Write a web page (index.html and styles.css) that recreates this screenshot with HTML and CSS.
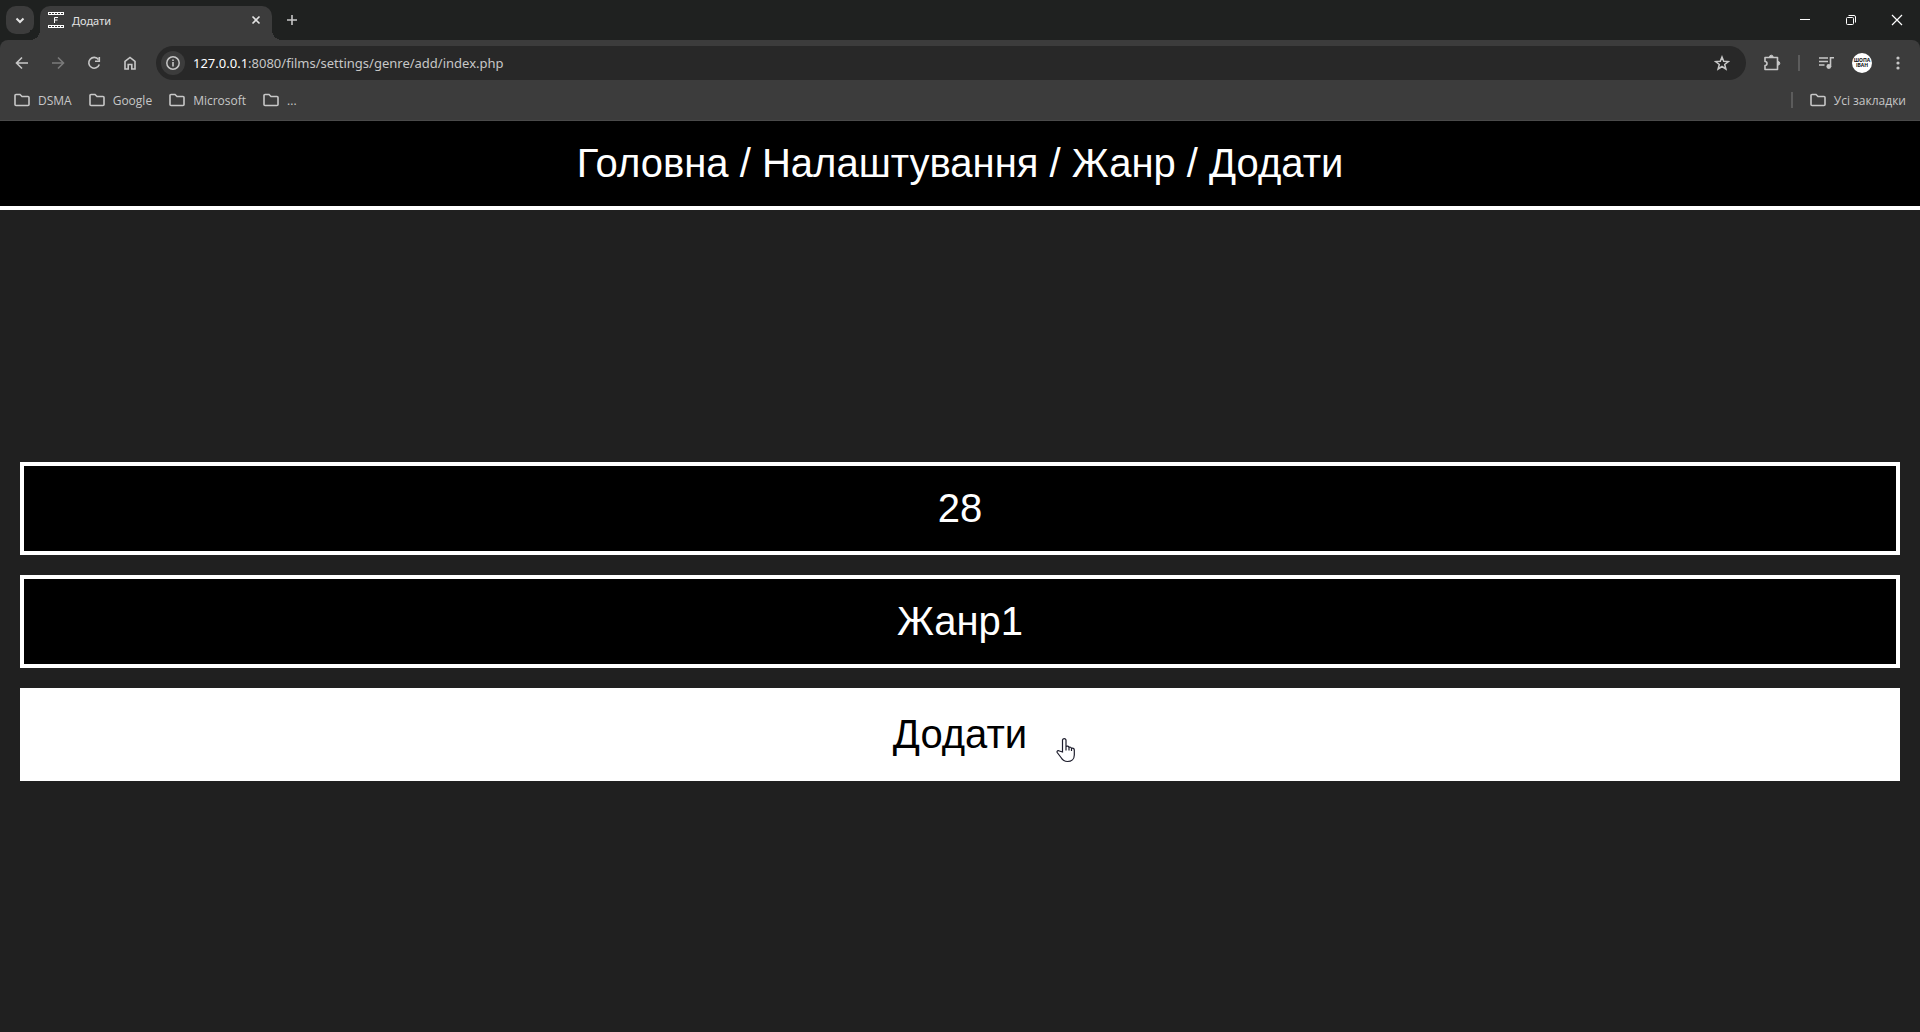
FILE: index.html
```html
<!DOCTYPE html>
<html lang="uk">
<head>
<meta charset="utf-8">
<title>Додати</title>
<link rel="stylesheet" href="styles.css">
</head>
<body>
<header class="browser">
  <div class="tabstrip">
    <button class="tab-search" aria-label="Пошук вкладок"><svg width="28" height="28" viewBox="0 0 28 28"><path d="M10.500 12.500l3.500 3.500 3.500-3.500" stroke-width="2"/></svg></button>
    <div class="tab">
      <svg width="16" height="16" viewBox="0 0 16 16"><path d="M0 1.500h16M0 14.500h16" stroke="#fff" stroke-width="3"/><path d="M1 1.500h15M1 14.500h15" stroke="#333" stroke-width="1" stroke-dasharray="2 1"/><path d="M6.500 11V5.500H10M6 8h3.500" stroke="#fff" stroke-width="1"/></svg>
      <span class="tab-title">Додати</span>
      <button class="tab-close" aria-label="Закрити вкладку"><svg width="16" height="16" viewBox="0 0 16 16"><path d="M4.500 4.500l7 7M11.500 4.500l-7 7"/></svg></button>
    </div>
    <button class="new-tab" aria-label="Нова вкладка"><svg width="16" height="16" viewBox="0 0 16 16"><path d="M8 3v10M3 8h10"/></svg></button>
    <div class="window-controls">
      <button aria-label="Згорнути"><svg width="12" height="12" viewBox="0 0 12 12"><path d="M1 5.500h10" stroke="#fff" stroke-width="1"/></svg></button>
      <button aria-label="Відновити"><svg width="12" height="12" viewBox="0 0 12 12"><rect x="1.500" y="3.500" width="7" height="7" rx="1" stroke="#fff" stroke-width="1"/><path d="M3.500 1.500h5.500a1.500 1.500 0 0 1 1.500 1.500v5.500" stroke="#fff" stroke-width="1"/></svg></button>
      <button aria-label="Закрити"><svg width="12" height="12" viewBox="0 0 12 12"><path d="M1 1l10 10M11 1L1 11" stroke="#fff" stroke-width="1.200"/></svg></button>
    </div>
  </div>
  <div class="toolbar">
    <nav class="nav-buttons">
      <button aria-label="Назад"><svg width="16" height="16" viewBox="0 0 16 16"><path d="M14 8H3M8 2.500L2.500 8 8 13.500"/></svg></button>
      <button class="is-disabled" aria-label="Вперед" disabled><svg width="16" height="16" viewBox="0 0 16 16"><path d="M2 8h11M8 2.500L13.500 8 8 13.500"/></svg></button>
      <button aria-label="Оновити"><svg width="16" height="16" viewBox="0 0 16 16"><path d="M12.500 4.500A5.400 5.400 0 1 0 13.300 9.500"/><path d="M13.300 2v4.200H9"/></svg></button>
      <button aria-label="Головна сторінка"><svg width="16" height="16" viewBox="0 0 16 16"><path d="M3 14V6.500L8 2.500l5 4V14H9.800V9.500H6.200V14z"/></svg></button>
    </nav>
    <div class="omnibox">
      <span class="site-info"><svg width="16" height="16" viewBox="0 0 16 16"><circle cx="8" cy="8" r="6.200" stroke-width="1.500"/><path d="M8 7v4.500M8 4.500v1.500"/></svg></span>
      <div class="url"><span class="host">127.0.0.1</span>:8080/films/settings/genre/add/index.php</div>
      <button class="star" aria-label="Додати до закладок"><svg width="16" height="16" viewBox="0 0 16 16"><path d="M8 2l1.700 4.300 4.600.3-3.600 2.900 1.200 4.500L8 11.500 4.100 14l1.200-4.500L1.700 6.600l4.600-.3z" stroke-width="1.500"/></svg></button>
    </div>
    <div class="actions">
      <button aria-label="Розширення"><svg width="18" height="18" viewBox="0 0 18 18"><path d="M2 3.500h12.500v12H2v-4a2 2 0 0 0 0-4z" stroke-linejoin="round"/><path d="M6.500 3a1.800 1.800 0 0 1 3.600 0zM15 7.500a1.800 1.800 0 0 1 0 3.600z" fill="#c7c7c7" stroke-width="1"/></svg></button>
      <span class="divider"></span>
      <button aria-label="Медіа"><svg width="18" height="18" viewBox="0 0 18 18"><path d="M2 4h9M2 7.500h9M2 11h5.500M13.500 13V3.700H17"/><circle cx="11.800" cy="12.500" r="2.400" fill="#c7c7c7" stroke="none"/></svg></button>
      <button aria-label="Профіль"><span class="avatar">ШОПА<br>ІВАН</span></button>
      <button aria-label="Меню"><svg width="16" height="16" viewBox="0 0 16 16"><g fill="#c7c7c7" stroke="none"><circle cx="8" cy="3" r="1.600"/><circle cx="8" cy="8" r="1.600"/><circle cx="8" cy="13" r="1.600"/></g></svg></button>
    </div>
  </div>
  <nav class="bookmarks">
    <a href="#"><svg width="16" height="14" viewBox="0 0 16 14"><path d="M1 11.500v-9a1 1 0 0 1 1-1h4l2 2h6a1 1 0 0 1 1 1v7a1 1 0 0 1-1 1H2a1 1 0 0 1-1-1z"/></svg>DSMA</a>
    <a href="#"><svg width="16" height="14" viewBox="0 0 16 14"><path d="M1 11.500v-9a1 1 0 0 1 1-1h4l2 2h6a1 1 0 0 1 1 1v7a1 1 0 0 1-1 1H2a1 1 0 0 1-1-1z"/></svg>Google</a>
    <a href="#"><svg width="16" height="14" viewBox="0 0 16 14"><path d="M1 11.500v-9a1 1 0 0 1 1-1h4l2 2h6a1 1 0 0 1 1 1v7a1 1 0 0 1-1 1H2a1 1 0 0 1-1-1z"/></svg>Microsoft</a>
    <a href="#"><svg width="16" height="14" viewBox="0 0 16 14"><path d="M1 11.500v-9a1 1 0 0 1 1-1h4l2 2h6a1 1 0 0 1 1 1v7a1 1 0 0 1-1 1H2a1 1 0 0 1-1-1z"/></svg>...</a>
    <span class="divider push"></span>
    <a href="#"><svg width="16" height="14" viewBox="0 0 16 14"><path d="M1 11.500v-9a1 1 0 0 1 1-1h4l2 2h6a1 1 0 0 1 1 1v7a1 1 0 0 1-1 1H2a1 1 0 0 1-1-1z"/></svg>Усі закладки</a>
  </nav>
</header>
<nav class="breadcrumbs"><a href="#">Головна</a> / <a href="#">Налаштування</a> / <a href="#">Жанр</a> / <a href="#">Додати</a></nav>
<main class="page">
  <form class="genre-form">
    <input class="field" type="text" name="id" aria-label="Номер" value="28">
    <input class="field" type="text" name="name" aria-label="Назва" value="Жанр1">
    <button class="submit" type="button">Додати</button>
  </form>
  <svg class="pointer" width="20" height="26" viewBox="0 0 20 26"><path d="M6.500 15V3a1.800 1.800 0 0 1 3.500 0v6.500c1-.8 2.600-.3 2.900.8 1-.6 2.400 0 2.600 1.100 1-.5 2.800 0 2.800 1.600V18c0 4-2.800 6.500-6.800 6.500-3.200 0-5-1.500-6.500-4L1.200 15.500c-.6-1.400.9-2.500 2.300-1.500z M10 9.500v4M13 10.500v3M15.500 11.500v2.500" fill="#fff" stroke="#1c1c2b" stroke-width="1.200"/></svg>
</main>
</body>
</html>
```
FILE: styles.css
```css
* { box-sizing: border-box; }
body {
  margin: 0;
  min-height: 100vh;
  display: flex;
  flex-direction: column;
  background: #202020;
  font-family: "Liberation Sans", Arial, sans-serif;
}
a { color: inherit; text-decoration: none; }
button { padding: 0; border: 0; background: none; font: inherit; color: inherit; }
svg { display: block; flex: none; fill: none; stroke: #c7c7c7; stroke-width: 1.600; }

.browser {
  background: #1f2120;
  color: #c7c7c7;
  font-family: "Noto Sans", "Open Sans", sans-serif;
  font-size: 11px;
  border-bottom: 1px solid #4a4a4a;
}
.browser button { display: flex; align-items: center; justify-content: center; }
.tabstrip { display: flex; height: 40px; padding-left: 6px; }
.tab-search { width: 28px; height: 28px; margin: 6px 6px 0 0; border-radius: 10px; background: #3c3c3c; }
.tab {
  position: relative;
  display: flex;
  align-items: center;
  width: 232px;
  margin-top: 6px;
  padding: 0 8px 6px;
  border-radius: 10px 10px 0 0;
  background: #3c3c3c;
  color: #e3e3e3;
}
.tab::before, .tab::after {
  content: "";
  position: absolute;
  bottom: 0;
  width: 10px;
  height: 10px;
}
.tab::before { right: 100%; background: radial-gradient(circle at 0 0, #1f2120 10px, #3c3c3c 10px); }
.tab::after { left: 100%; background: radial-gradient(circle at 100% 0, #1f2120 10px, #3c3c3c 10px); }
.tab-title { flex: 1; padding-left: 8px; }
.tab-close svg, .tab-search svg { stroke: #e3e3e3; }
.new-tab { width: 28px; height: 28px; margin: 6px 0 0 6px; }
.window-controls { display: flex; margin-left: auto; }
.window-controls button { width: 46px; height: 40px; }

.toolbar {
  display: flex;
  align-items: center;
  height: 46px;
  padding: 0 8px;
  border-radius: 8px 8px 0 0;
  background: #3c3c3c;
}
.nav-buttons { display: flex; }
.nav-buttons button { width: 28px; height: 28px; margin-right: 8px; }
.is-disabled { opacity: 0.450; }
.omnibox {
  flex: 1;
  display: flex;
  align-items: center;
  height: 34px;
  margin: 0 12px 0 4px;
  padding: 0 16px 0 5px;
  border-radius: 17px;
  background: #282828;
}
.site-info { display: grid; place-items: center; width: 24px; height: 24px; border-radius: 50%; background: #3c3c3c; }
.url { flex: 1; padding-left: 8px; font-size: 13px; }
.host { color: #fff; }
.actions { display: flex; align-items: center; gap: 8px; }
.actions button { width: 28px; height: 28px; }
.divider { width: 2px; height: 16px; background: #5c5c5c; }
.actions .divider { margin: 0 4px; }
.actions .avatar {
  display: flex;
  align-items: center;
  justify-content: center;
  width: 20px;
  height: 20px;
  border-radius: 50%;
  background: #fff;
  color: #111;
  font-size: 5px;
  font-weight: 700;
  line-height: 5px;
  text-align: center;
}

.bookmarks {
  display: flex;
  align-items: center;
  gap: 17px;
  height: 34px;
  padding: 0 14px 6px;
  background: #3c3c3c;
  font-family: "Open Sans", "Noto Sans", sans-serif;
  font-size: 12px;
}
.bookmarks a { display: flex; align-items: center; gap: 8px; }
.bookmarks .push { margin-left: auto; }

.breadcrumbs {
  padding: 20px;
  border-bottom: 4px solid #fff;
  background: #000;
  color: #fff;
  font-size: 40px;
  line-height: 45px;
  text-align: center;
}

.page { position: relative; flex: 1; display: flex; flex-direction: column; justify-content: center; padding: 20px; }
.genre-form { display: flex; flex-direction: column; gap: 20px; }
.field, .submit {
  width: 100%;
  padding: 20px;
  border: 4px solid #fff;
  border-radius: 0;
  background: #000;
  color: #fff;
  font-family: inherit;
  font-size: 40px;
  line-height: 45px;
  text-align: center;
}
.submit { background: #fff; color: #000; }
.pointer { position: absolute; left: 55%; top: 527px; }
```
